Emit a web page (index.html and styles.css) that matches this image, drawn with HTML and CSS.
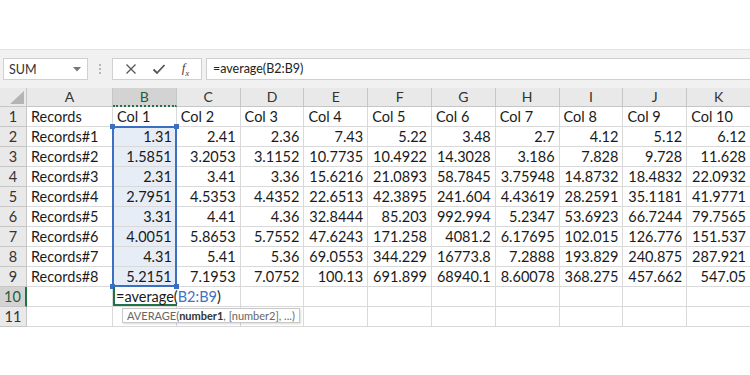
FILE: index.html
```html
<!DOCTYPE html>
<html lang="en">
<head>
    <meta charset="UTF-8">
    <meta name="viewport" content="width=device-width, initial-scale=1.0">
    <title>Average formula</title>
    <link rel="stylesheet" href="styles.css">
</head>
<body>

    <div class="top-space"></div>

    <!-- Namensfeld und Bearbeitungsleiste -->
    <div class="toolbar">
        <div class="name-box">
            <span>SUM</span>
            <svg class="drop" width="8" height="5" viewBox="0 0 8 5"><path d="M0 0 L8 0 L4 4.5 Z" fill="#777"/></svg>
        </div>
        <div class="grip"><i></i><i></i><i></i></div>
        <div class="fx-buttons">
            <svg width="12" height="12" viewBox="0 0 12 12"><path d="M1.5 1.5 L10.5 10.5 M10.5 1.5 L1.5 10.5" stroke="#555" stroke-width="1.3"/></svg>
            <svg width="14" height="12" viewBox="0 0 14 12"><path d="M1.5 6.5 L5 10 L12.5 2" stroke="#555" stroke-width="1.8" fill="none"/></svg>
            <span class="fx">f<sub>x</sub></span>
        </div>
        <div class="formula-bar">=average(B2:B9)</div>
    </div>

    <div class="sheet">
        <div class="hdr corner"><svg width="14" height="13" viewBox="0 0 14 13"><path d="M14 0 L14 13 L0 13 Z" fill="#b4b4b4"/></svg></div>
        <div class="hdr">A</div>
        <div class="hdr active-col">B</div>
        <div class="hdr">C</div>
        <div class="hdr">D</div>
        <div class="hdr">E</div>
        <div class="hdr">F</div>
        <div class="hdr">G</div>
        <div class="hdr">H</div>
        <div class="hdr">I</div>
        <div class="hdr">J</div>
        <div class="hdr">K</div>

        <div class="rh">1</div>
        <div class="cell">Records</div>
        <div class="cell">Col 1</div>
        <div class="cell">Col 2</div>
        <div class="cell">Col 3</div>
        <div class="cell">Col 4</div>
        <div class="cell">Col 5</div>
        <div class="cell">Col 6</div>
        <div class="cell">Col 7</div>
        <div class="cell">Col 8</div>
        <div class="cell">Col 9</div>
        <div class="cell">Col 10</div>

        <div class="rh">2</div>
        <div class="cell">Records#1</div>
        <div class="cell num sel">1.31</div>
        <div class="cell num">2.41</div>
        <div class="cell num">2.36</div>
        <div class="cell num">7.43</div>
        <div class="cell num">5.22</div>
        <div class="cell num">3.48</div>
        <div class="cell num">2.7</div>
        <div class="cell num">4.12</div>
        <div class="cell num">5.12</div>
        <div class="cell num">6.12</div>

        <div class="rh">3</div>
        <div class="cell">Records#2</div>
        <div class="cell num sel">1.5851</div>
        <div class="cell num">3.2053</div>
        <div class="cell num">3.1152</div>
        <div class="cell num">10.7735</div>
        <div class="cell num">10.4922</div>
        <div class="cell num">14.3028</div>
        <div class="cell num">3.186</div>
        <div class="cell num">7.828</div>
        <div class="cell num">9.728</div>
        <div class="cell num">11.628</div>

        <div class="rh">4</div>
        <div class="cell">Records#3</div>
        <div class="cell num sel">2.31</div>
        <div class="cell num">3.41</div>
        <div class="cell num">3.36</div>
        <div class="cell num">15.6216</div>
        <div class="cell num">21.0893</div>
        <div class="cell num">58.7845</div>
        <div class="cell num">3.75948</div>
        <div class="cell num">14.8732</div>
        <div class="cell num">18.4832</div>
        <div class="cell num">22.0932</div>

        <div class="rh">5</div>
        <div class="cell">Records#4</div>
        <div class="cell num sel">2.7951</div>
        <div class="cell num">4.5353</div>
        <div class="cell num">4.4352</div>
        <div class="cell num">22.6513</div>
        <div class="cell num">42.3895</div>
        <div class="cell num">241.604</div>
        <div class="cell num">4.43619</div>
        <div class="cell num">28.2591</div>
        <div class="cell num">35.1181</div>
        <div class="cell num">41.9771</div>

        <div class="rh">6</div>
        <div class="cell">Records#5</div>
        <div class="cell num sel">3.31</div>
        <div class="cell num">4.41</div>
        <div class="cell num">4.36</div>
        <div class="cell num">32.8444</div>
        <div class="cell num">85.203</div>
        <div class="cell num">992.994</div>
        <div class="cell num">5.2347</div>
        <div class="cell num">53.6923</div>
        <div class="cell num">66.7244</div>
        <div class="cell num">79.7565</div>

        <div class="rh">7</div>
        <div class="cell">Records#6</div>
        <div class="cell num sel">4.0051</div>
        <div class="cell num">5.8653</div>
        <div class="cell num">5.7552</div>
        <div class="cell num">47.6243</div>
        <div class="cell num">171.258</div>
        <div class="cell num">4081.2</div>
        <div class="cell num">6.17695</div>
        <div class="cell num">102.015</div>
        <div class="cell num">126.776</div>
        <div class="cell num">151.537</div>

        <div class="rh">8</div>
        <div class="cell">Records#7</div>
        <div class="cell num sel">4.31</div>
        <div class="cell num">5.41</div>
        <div class="cell num">5.36</div>
        <div class="cell num">69.0553</div>
        <div class="cell num">344.229</div>
        <div class="cell num">16773.8</div>
        <div class="cell num">7.2888</div>
        <div class="cell num">193.829</div>
        <div class="cell num">240.875</div>
        <div class="cell num">287.921</div>

        <div class="rh">9</div>
        <div class="cell">Records#8</div>
        <div class="cell num sel">5.2151</div>
        <div class="cell num">7.1953</div>
        <div class="cell num">7.0752</div>
        <div class="cell num">100.13</div>
        <div class="cell num">691.899</div>
        <div class="cell num">68940.1</div>
        <div class="cell num">8.60078</div>
        <div class="cell num">368.275</div>
        <div class="cell num">457.662</div>
        <div class="cell num">547.05</div>

        <div class="rh active-row">10</div>
        <div class="cell"></div>
        <div class="cell editing">=average(<span class="ref">B2:B9</span>)</div>
        <div class="cell"></div>
        <div class="cell"></div>
        <div class="cell"></div>
        <div class="cell"></div>
        <div class="cell"></div>
        <div class="cell"></div>
        <div class="cell"></div>
        <div class="cell"></div>
        <div class="cell"></div>

        <div class="rh">11</div>
        <div class="cell"></div>
        <div class="cell"></div>
        <div class="cell"></div>
        <div class="cell"></div>
        <div class="cell"></div>
        <div class="cell"></div>
        <div class="cell"></div>
        <div class="cell"></div>
        <div class="cell"></div>
        <div class="cell"></div>
        <div class="cell"></div>

        <!-- Bereichsmarkierung B2:B9 -->
        <div class="range">
            <i class="h tl"></i><i class="h tr"></i><i class="h bl"></i><i class="h br"></i>
        </div>
        <div class="tip">AVERAGE(<b>number1</b>, [number2], ...)</div>
    </div>

</body>
</html>
```

FILE: styles.css
```css
/* Basis */
body {
    margin: 0;
    background: #fff;
    font-family: Lato, "Open Sans", sans-serif;
    color: #1a1a1a;
    overflow: hidden;
}

.top-space {
    height: 49px;
}

/* Bearbeitungsleiste */
.toolbar {
    height: 39px;
    background: #f1f1f1;
    border-top: 1px solid #e2e2e2;
    box-sizing: border-box;
    display: flex;
    align-items: flex-start;
    padding-top: 8px;
    padding-left: 3px;
}

.name-box {
    width: 85px;
    height: 22px;
    box-sizing: border-box;
    background: #fff;
    border: 1px solid #d0d0d0;
    display: flex;
    align-items: center;
    justify-content: space-between;
    padding: 0 6px 0 5px;
    font-size: 12.5px;
    color: #333;
}

.grip {
    width: 24px;
    display: flex;
    flex-direction: column;
    align-items: center;
    gap: 2px;
    padding-top: 6px;
}

.grip i {
    width: 2px;
    height: 2px;
    background: #b8b8b8;
}

.fx-buttons {
    width: 90px;
    height: 22px;
    box-sizing: border-box;
    background: #fff;
    border: 1px solid #d0d0d0;
    display: flex;
    align-items: center;
    justify-content: space-around;
    padding: 0 4px;
}

.fx {
    font-family: "Liberation Serif", serif;
    font-style: italic;
    font-size: 13px;
    color: #444;
}

.fx sub {
    font-size: 9px;
}

.formula-bar {
    flex: 1;
    height: 22px;
    margin-left: 4px;
    box-sizing: border-box;
    background: #fff;
    border: 1px solid #d0d0d0;
    border-right: none;
    padding: 2px 6px;
    font-size: 12.5px;
    color: #222;
}

/* Tabelle */
.sheet {
    position: relative;
    display: grid;
    grid-template-columns: 27px 86px repeat(10, 63.8px);
    grid-template-rows: 19px repeat(11, 20px);
    font-size: 14.5px;
}

.hdr, .rh, .cell {
    box-sizing: border-box;
    border-right: 1px solid #d9d9d9;
    border-bottom: 1px solid #d9d9d9;
    white-space: nowrap;
    line-height: 19px;
}

.hdr {
    background: #e9e9e9;
    border-right-color: #c6c6c6;
    border-bottom-color: #c6c6c6;
    text-align: center;
    font-size: 14px;
    line-height: 18px;
    color: #333;
}

.corner {
    display: flex;
    justify-content: flex-end;
    align-items: flex-end;
    padding: 0 2px 2px 0;
}

.active-col {
    background: #d3d3d3;
    border-bottom: 2px dotted #217346;
    color: #1f5e3a;
}

.rh {
    background: #e9e9e9;
    border-right-color: #c6c6c6;
    border-bottom-color: #c6c6c6;
    text-align: center;
    font-size: 14.5px;
    color: #333;
}

.active-row {
    background: #d3d3d3;
    border-right: 2px solid #217346;
    color: #1f5e3a;
}

.cell {
    padding: 0 4px;
    background: #fff;
}

.num {
    text-align: right;
}

.sel {
    background: #e7edf7;
}

.editing {
    overflow: visible;
    position: relative;
    z-index: 2;
    background: transparent;
    border-right: none;
    box-shadow: inset 2px 0 0 #217346, inset 0 -2px 0 #217346;
    padding-left: 3px;
}

.ref {
    color: #3d72c4;
}

/* Markierung und Hinweis */
.range {
    position: absolute;
    left: 112px;
    top: 38px;
    width: 65px;
    height: 161px;
    border: 2px solid #3a6fc1;
    box-sizing: border-box;
    pointer-events: none;
}

.range .h {
    position: absolute;
    width: 5px;
    height: 5px;
    background: #3a6fc1;
}

.h.tl { left: -4px; top: -4px; }
.h.tr { right: -4px; top: -4px; }
.h.bl { left: -4px; bottom: -4px; }
.h.br { right: -4px; bottom: -4px; }

.tip {
    position: absolute;
    left: 122px;
    top: 220px;
    height: 15px;
    box-sizing: border-box;
    padding: 0 4px;
    background: #fff;
    border: 1px solid #c8c8c8;
    box-shadow: 1px 1px 2px rgba(0, 0, 0, 0.15);
    font-size: 11px;
    line-height: 13px;
    color: #666;
    z-index: 3;
}

.tip b {
    color: #333;
}
```
